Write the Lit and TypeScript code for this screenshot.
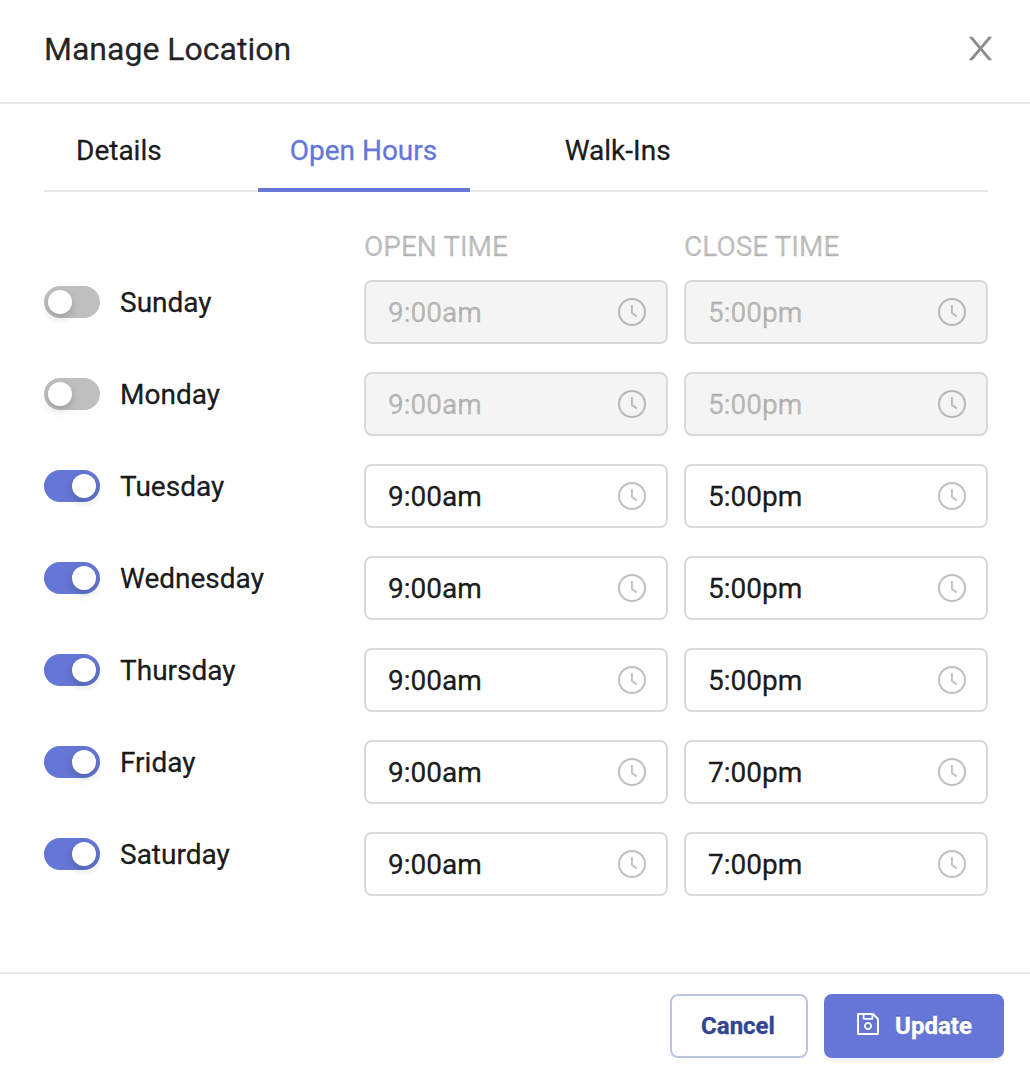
import { LitElement, html, css, svg } from "lit";
import { customElement, property, state } from "lit/decorators.js";
import { classMap } from "lit/directives/class-map.js";

interface DayHours {
  name: string;
  enabled: boolean;
  open: string;
  close: string;
}

const closeIcon = svg`<path d="M563.8 512l262.5-312.9c4.4-5.2.7-13.1-6.1-13.1h-79.8c-4.7 0-9.2 2.1-12.3 5.7L511.6 449.8 295.1 191.7c-3-3.6-7.5-5.7-12.3-5.7H203c-6.8 0-10.5 7.9-6.1 13.1L459.4 512 196.9 824.9A7.95 7.95 0 0 0 203 838h79.8c4.7 0 9.2-2.1 12.3-5.7l216.5-258.1 216.5 258.1c3 3.6 7.5 5.7 12.3 5.7h79.8c6.8 0 10.5-7.9 6.1-13.1L563.8 512z"/>`;
const clockIcon = svg`<circle cx="16" cy="16" r="13" stroke-width="2"/><path d="M15.900 9v8l5 3.600" stroke-width="1.800"/>`;
const saveIcon = svg`<path d="M893.3 293.3L730.7 130.7c-7.5-7.5-16.7-13-26.7-16V112H144c-17.7 0-32 14.3-32 32v736c0 17.7 14.3 32 32 32h736c17.7 0 32-14.3 32-32V338.5c0-17-6.7-33.2-18.7-45.2zM384 184h256v104H384V184zm456 656H184V184h136v136c0 17.7 14.3 32 32 32h320c17.7 0 32-14.3 32-32V205.8l136 136V840zM512 442c-79.5 0-144 64.5-144 144s64.5 144 144 144 144-64.5 144-144-64.5-144-144-144zm0 224c-44.2 0-80-35.8-80-80s35.8-80 80-80 80 35.8 80 80-35.8 80-80 80z"/>`;

@customElement("time-field")
export class TimeField extends LitElement {
  @property() value = "";
  @property({ type: Boolean }) disabled = false;

  static styles = css`
    :host {
      display: block;
    }
    .field {
      box-sizing: border-box;
      height: 64px;
      padding: 0 18px 0 22px;
      display: flex;
      align-items: center;
      justify-content: space-between;
      border: 2px solid #d9d9d9;
      border-radius: 8px;
      background: #fff;
      color: rgba(0, 0, 0, 0.9);
    }
    .disabled {
      background: #f4f4f4;
      color: rgba(0, 0, 0, 0.25);
    }
    .value {
      padding-top: 2px;
    }
    .icon {
      display: block;
      width: 32px;
      height: 32px;
      fill: none;
      stroke: rgba(0, 0, 0, 0.25);
    }
  `;

  render() {
    return html`<div class=${classMap({ field: true, disabled: this.disabled })}>
      <span class="value">${this.value}</span>
      <svg class="icon" viewBox="0 0 32 32">${clockIcon}</svg>
    </div>`;
  }
}

@customElement("toggle-switch")
export class ToggleSwitch extends LitElement {
  @property({ type: Boolean }) checked = false;

  static styles = css`
    :host {
      display: block;
    }
    .track {
      box-sizing: border-box;
      display: flex;
      width: 56px;
      height: 32px;
      padding: 4px;
      border-radius: 16px;
      background: rgba(0, 0, 0, 0.25);
    }
    .on {
      justify-content: flex-end;
      background: #6576d7;
    }
    .knob {
      width: 24px;
      height: 24px;
      border-radius: 50%;
      background: #fff;
      box-shadow: 0 4px 8px rgba(0, 35, 11, 0.2);
    }
  `;

  render() {
    return html`<div class=${classMap({ track: true, on: this.checked })} role="switch" aria-checked=${this.checked}>
      <div class="knob"></div>
    </div>`;
  }
}

@customElement("app-root")
export class AppRoot extends LitElement {
  @state() private tab = "Open Hours";
  @state() private days: DayHours[] = [
    { name: "Sunday", enabled: false, open: "9:00am", close: "5:00pm" },
    { name: "Monday", enabled: false, open: "9:00am", close: "5:00pm" },
    { name: "Tuesday", enabled: true, open: "9:00am", close: "5:00pm" },
    { name: "Wednesday", enabled: true, open: "9:00am", close: "5:00pm" },
    { name: "Thursday", enabled: true, open: "9:00am", close: "5:00pm" },
    { name: "Friday", enabled: true, open: "9:00am", close: "7:00pm" },
    { name: "Saturday", enabled: true, open: "9:00am", close: "7:00pm" },
  ];

  static styles = css`
    :host {
      display: block;
      font-family: Roboto, sans-serif;
      font-size: 28px;
      line-height: 44px;
      color: rgba(0, 0, 0, 0.9);
      -webkit-text-stroke-width: 0.3px;
    }
    .modal {
      box-sizing: border-box;
      height: 1074px;
      display: flex;
      flex-direction: column;
      background: #fff;
    }
    .header {
      box-sizing: border-box;
      height: 104px;
      padding: 0 31.5px 6px 44px;
      display: flex;
      align-items: center;
      justify-content: space-between;
      border-bottom: 2px solid #e8e8e8;
    }
    .title {
      padding-top: 2px;
      font-size: 32px;
      color: rgba(0, 0, 0, 0.85);
    }
    .close {
      display: block;
      width: 37px;
      height: 37px;
      fill: rgba(0, 0, 0, 0.45);
    }
    .body {
      flex: 1;
      padding: 0 42px 0 44px;
    }
    .tabs {
      box-sizing: border-box;
      height: 88px;
      display: flex;
      gap: 64px;
      border-bottom: 2px solid #e8e8e8;
    }
    .tab {
      box-sizing: border-box;
      height: 88px;
      padding: 25px 32px 0;
      border-bottom: 4px solid transparent;
    }
    .active {
      width: 212px;
      margin-right: -1px;
      color: #6576d7;
      border-bottom-color: #6576d7;
    }
    .row {
      display: grid;
      grid-template-columns: 304px 304px 304px;
      gap: 16px;
    }
    .heads {
      padding-top: 33px;
      color: rgba(0, 0, 0, 0.25);
    }
    .rows {
      padding-top: 11px;
      display: grid;
      gap: 28px;
    }
    .day {
      height: 44px;
      display: flex;
      align-items: center;
      gap: 20px;
    }
    .name {
      padding-top: 2px;
    }
    .footer {
      box-sizing: border-box;
      height: 102px;
      padding: 20px 26px 0 0;
      display: flex;
      justify-content: flex-end;
      gap: 16px;
      border-top: 2px solid #e8e8e8;
    }
    .button {
      box-sizing: border-box;
      height: 64px;
      display: flex;
      align-items: center;
      justify-content: center;
      padding-right: 2px;
      border-radius: 8px;
      font-size: 24px;
      font-weight: 700;
    }
    .cancel {
      width: 138px;
      border: 2px solid #bcc3e3;
      color: #35458f;
    }
    .update {
      width: 180px;
      gap: 13px;
      background: #6576d7;
      color: #fff;
      text-shadow: 0 -2px 0 rgba(0, 0, 0, 0.12);
      box-shadow: 0 4px 0 rgba(0, 0, 0, 0.045);
    }
    .save {
      display: block;
      width: 28px;
      height: 28px;
      margin-top: -4px;
      fill: currentColor;
    }
  `;

  render() {
    return html`<div class="modal">
      <div class="header">
        <span class="title">Manage Location</span>
        <svg class="close" viewBox="0 0 1024 1024">${closeIcon}</svg>
      </div>
      <div class="body">
        <div class="tabs">
          ${["Details", "Open Hours", "Walk-Ins"].map(
            (t) => html`<div class=${classMap({ tab: true, active: t === this.tab })} @click=${() => (this.tab = t)}>${t}</div>`
          )}
        </div>
        <div class="row heads">
          <span></span>
          <span>OPEN TIME</span>
          <span>CLOSE TIME</span>
        </div>
        <div class="rows">
          ${this.days.map(
            (d, i) => html`<div class="row">
              <div class="day">
                <toggle-switch .checked=${d.enabled} @click=${() => this.toggle(i)}></toggle-switch>
                <span class="name">${d.name}</span>
              </div>
              <time-field .value=${d.open} .disabled=${!d.enabled}></time-field>
              <time-field .value=${d.close} .disabled=${!d.enabled}></time-field>
            </div>`
          )}
        </div>
      </div>
      <div class="footer">
        <div class="button cancel">Cancel</div>
        <div class="button update">
          <svg class="save" viewBox="0 0 1024 1024">${saveIcon}</svg>
          <span>Update</span>
        </div>
      </div>
    </div>`;
  }

  private toggle(index: number) {
    this.days = this.days.map((d, i) => (i === index ? { ...d, enabled: !d.enabled } : d));
  }
}
